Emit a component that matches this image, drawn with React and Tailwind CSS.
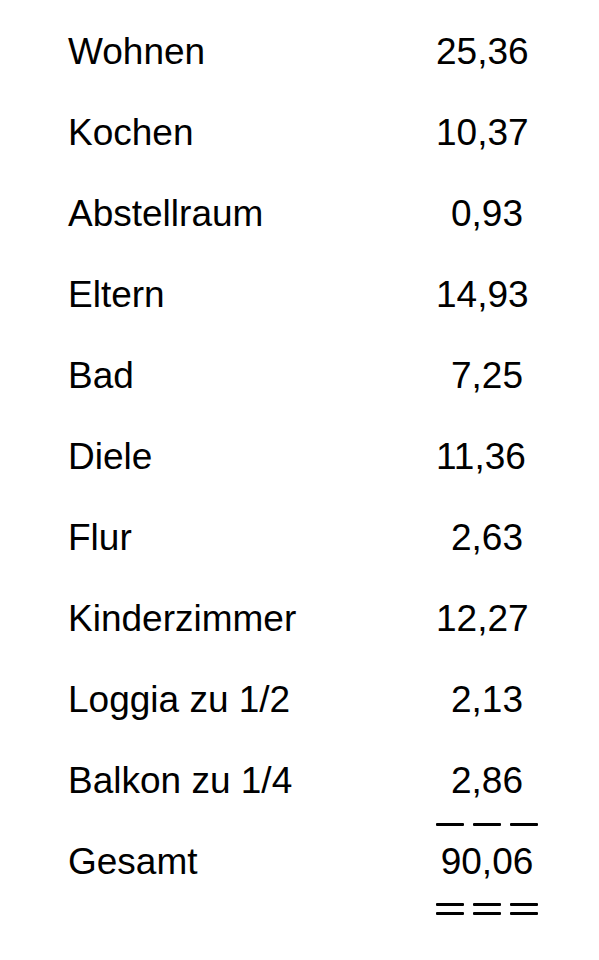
import React from "react";

const rows = [
  ["Wohnen", "25,36"],
  ["Kochen", "10,37"],
  ["Abstellraum", "0,93"],
  ["Eltern", "14,93"],
  ["Bad", "7,25"],
  ["Diele", "11,36"],
  ["Flur", "2,63"],
  ["Kinderzimmer", "12,27"],
  ["Loggia zu 1/2", "2,13"],
  ["Balkon zu 1/4", "2,86"],
];

function Bars({ double }) {
  return (
    <div className="flex gap-[9px]">
      {[0, 1, 2].map((i) => (
        <div key={i} className="flex flex-col gap-[6px]">
          <div className="w-[28px] h-[3px] bg-black rounded-[1px]" />
          {double && <div className="w-[28px] h-[3px] bg-black rounded-[1px]" />}
        </div>
      ))}
    </div>
  );
}

export default function App() {
  return (
    <div
      className="w-[599px] h-[960px] bg-white text-black pt-[11px]"
      style={{ fontFamily: '"Liberation Sans", Arial, sans-serif' }}
    >
      {rows.map(([label, value]) => (
        <div key={label} className="flex h-[81px] items-center text-[37px] leading-none">
          <div className="pl-[68px] w-[436px]">{label}</div>
          <div className="w-[102px] pr-[15px] text-right">{value}</div>
        </div>
      ))}
      <div className="flex h-[81px] text-[37px] leading-none">
        <div className="pl-[68px] w-[436px] flex items-center">Gesamt</div>
        <div className="w-[102px] flex flex-col">
          <div className="pt-[2px]">
            <Bars />
          </div>
          <div className="flex-1 flex items-center justify-center -mt-[5px]">90,06</div>
        </div>
      </div>
      <div className="flex pt-[1px]">
        <div className="w-[436px]" />
        <Bars double />
      </div>
    </div>
  );
}
